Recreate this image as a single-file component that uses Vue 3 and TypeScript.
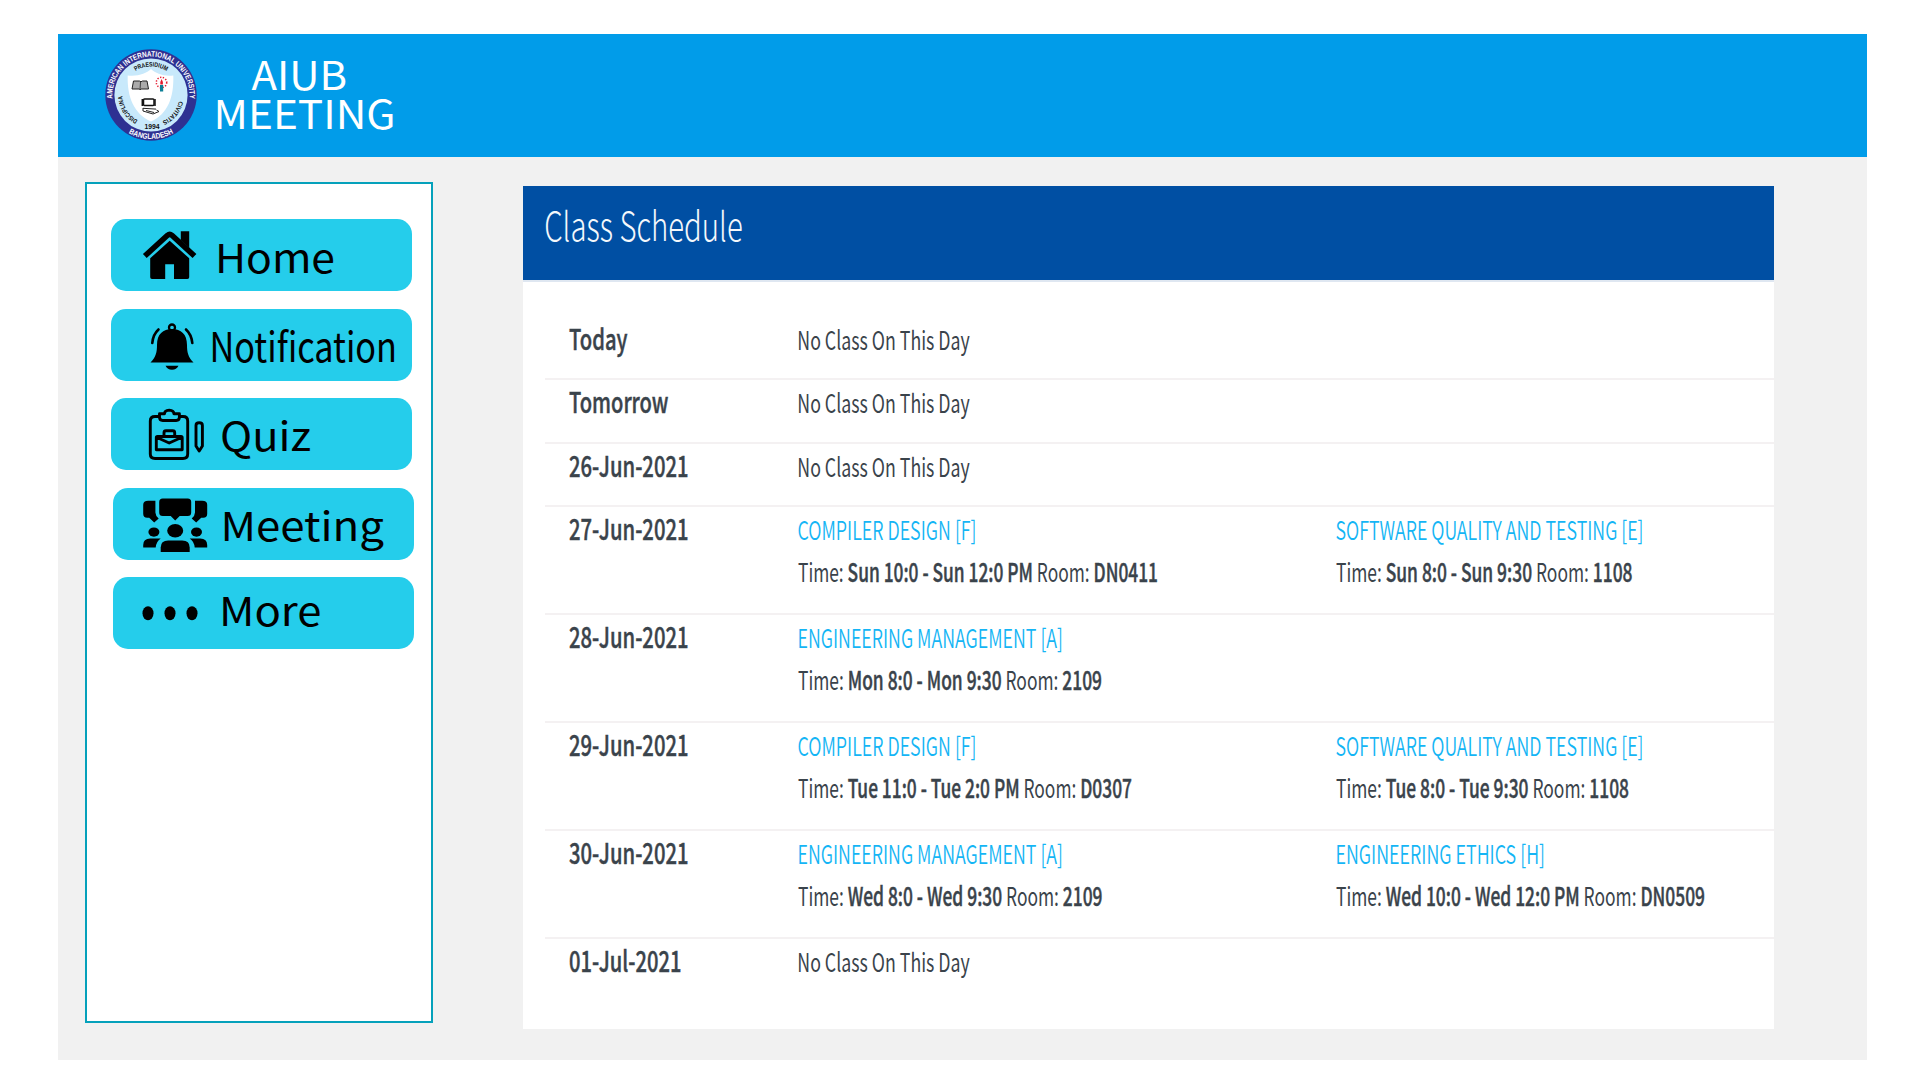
<script setup lang="ts">
import { computed } from 'vue'

interface Course {
  title: string
  titleWidth: number
  time: string
  room: string
  timeWidth: number
}

interface Day {
  label: string
  labelWidth: number
  courses: Course[]
}

const compiler = (time: string, room: string, timeWidth: number): Course => ({
  title: 'COMPILER DESIGN [F]', titleWidth: 179, time, room, timeWidth,
})
const quality = (time: string, timeWidth: number): Course => ({
  title: 'SOFTWARE QUALITY AND TESTING [E]', titleWidth: 308, time, room: '1108', timeWidth,
})
const management = (time: string, timeWidth: number): Course => ({
  title: 'ENGINEERING MANAGEMENT [A]', titleWidth: 265.5, time, room: '2109', timeWidth,
})

const days: Day[] = [
  { label: 'Today', labelWidth: 58.5, courses: [] },
  { label: 'Tomorrow', labelWidth: 99.5, courses: [] },
  { label: '26-Jun-2021', labelWidth: 119.5, courses: [] },
  {
    label: '27-Jun-2021', labelWidth: 119.5,
    courses: [compiler('Sun 10:0 - Sun 12:0 PM', 'DN0411', 360), quality('Sun 8:0 - Sun 9:30', 296.5)],
  },
  { label: '28-Jun-2021', labelWidth: 119.5, courses: [management('Mon 8:0 - Mon 9:30', 304)] },
  {
    label: '29-Jun-2021', labelWidth: 119.5,
    courses: [compiler('Tue 11:0 - Tue 2:0 PM', 'D0307', 334), quality('Tue 8:0 - Tue 9:30', 293)],
  },
  {
    label: '30-Jun-2021', labelWidth: 119.5,
    courses: [
      management('Wed 8:0 - Wed 9:30', 304.5),
      { title: 'ENGINEERING ETHICS [H]', titleWidth: 209.5, time: 'Wed 10:0 - Wed 12:0 PM', room: 'DN0509', timeWidth: 369 },
    ],
  },
  { label: '01-Jul-2021', labelWidth: 112.5, courses: [] },
]

interface NavItem {
  id: string
  label: string
  x: number
  y: number
  width: number
  size: number
  shift: number
}

const nav: NavItem[] = [
  { id: 'home', label: 'Home', x: 104, y: 54.3, width: 120, size: 40, shift: 0 },
  { id: 'notification', label: 'Notification', x: 98.5, y: 52.8, width: 187.5, size: 41, shift: 0.5 },
  { id: 'quiz', label: 'Quiz', x: 109, y: 53.3, width: 91, size: 40, shift: 0.5 },
  { id: 'meeting', label: 'Meeting', x: 107.5, y: 53.2, width: 163.5, size: 40, shift: 2 },
  { id: 'more', label: 'More', x: 106, y: 49.3, width: 102.5, size: 40, shift: 2 },
]

const rows = computed(() => days.map((d) => ({ ...d, busy: d.courses.length > 0 })))
</script>

<template>
  <div class="page">
    <header class="topbar">
      <svg class="logo" width="92" height="92" viewBox="-46 -46 92 92">
        <defs>
          <path id="ring-all" d="M-37.8 8A38.6 38.6 0 1 1 37.8 8" />
          <path id="ring-low" d="M-44 0A44 44 0 0 0 44 0" />
          <path id="ring-in" d="M0 28.500A28.500 28.500 0 0 1 0 -28.500A28.500 28.500 0 0 1 0 28.500" />
        </defs>
        <circle r="45.700" fill="#2e3192" />
        <circle r="36.600" fill="#c8e9fb" />
        <path d="M-23.300-19.500C-12-18.500-5-21.500 0-26 5-21.500 12-18.500 22.300-19.500 23 2 17 19 0 26.500-17 19-24 2-23.300-19.500Z" fill="#fff" />
        <g font-family="Liberation Sans, sans-serif" font-weight="700" text-anchor="middle">
          <g fill="#fff" font-size="7.800">
            <text><textPath href="#ring-all" startOffset="50%" textLength="128" lengthAdjust="spacingAndGlyphs">AMERICAN INTERNATIONAL UNIVERSITY</textPath></text>
            <text><textPath href="#ring-low" startOffset="50%" textLength="47" lengthAdjust="spacingAndGlyphs">BANGLADESH</textPath></text>
          </g>
          <g fill="#111" font-size="6.400">
            <text><textPath href="#ring-in" startOffset="50%" textLength="33" lengthAdjust="spacingAndGlyphs">PRAESIDIUM</textPath></text>
            <text><textPath href="#ring-in" startOffset="16%" textLength="30" lengthAdjust="spacingAndGlyphs">DISCIPLINA</textPath></text>
            <text><textPath href="#ring-in" startOffset="86%" textLength="27" lengthAdjust="spacingAndGlyphs">CIVITATIS</textPath></text>
            <text x="1" y="34.300" font-size="6.800">1994</text>
          </g>
        </g>
        <path d="M-17.500-14h6l1.500.8 1.500-.8h4.500l1.500 8h-7.500l-.8.8-.8-.8H-19Z" fill="#aaa" stroke="#222" stroke-width="1" />
        <path d="M-10.500-13l-.5 8" stroke="#222" stroke-width=".8" />
        <circle cx="10.500" cy="-12.500" r="5.200" fill="none" stroke="#e31b2f" stroke-width="1.500" stroke-dasharray="1.300 1.500" />
        <path d="M10.600-16q1.600 2.500 1.300 5.500h-2.600q-.3-3 1.300-5.500" fill="#e31b2f" />
        <path d="M9-10h3.200v6.500H9Z" fill="#0c7f96" />
        <rect x="-7.500" y="4" width="10.500" height="6.500" rx="1" fill="#fff" stroke="#111" stroke-width="1.500" />
        <path d="M-8.700 4v7M4 4v7" stroke="#111" stroke-width="1.500" />
        <path d="M-8 13.300l13 .8M-8 13v3l10 3 6-2.500-2.500-1.500M-5 15.500l8 2" fill="none" stroke="#222" stroke-width="1" />
      </svg>
      <svg class="brand" width="200" height="90" fill="#fff" font-size="40">
        <text x="44.500" y="41.700" textLength="95.500" lengthAdjust="spacingAndGlyphs">AIUB</text>
        <text x="6.500" y="81" textLength="182" lengthAdjust="spacingAndGlyphs">MEETING</text>
      </svg>
    </header>

    <div class="content">
      <nav class="sidebar">
        <a v-for="item in nav" :key="item.id" class="nav-item" :style="{ marginLeft: item.shift + 'px' }">
          <svg width="301" height="72">
            <g v-if="item.id === 'home'" transform="translate(-.5)">
              <path d="M70.300 12.300h8.400v16.500l-8.400-7.500Z" />
              <path d="M34.300 37L57 16.300q2.200-1.900 4.400 0L84 37" fill="none" stroke="#000" stroke-width="5.600" stroke-linejoin="round" />
              <path d="M59.200 21.700L78.700 39.300V58.200q0 1.800-1.800 1.800H63.500V45.300h-8.800V60H41.500q-1.800 0-1.800-1.800V39.300Z" />
            </g>
            <g v-else-if="item.id === 'notification'">
              <circle cx="61" cy="18.500" r="3" fill="none" stroke="#000" stroke-width="2.300" />
              <path d="M39.500 53.500C45 48 46 43 46 36 46 25 52 20 61 20s15 5 15 16c0 7 1 12 6.500 17.500Z" />
              <path d="M54.500 56.700h13q-2 4-6.500 4t-6.500-4" />
              <path d="M47.500 20.500Q42 25.500 41.300 34M75 20.500Q80.500 25.500 81.300 34" fill="none" stroke="#000" stroke-width="2.600" stroke-linecap="round" />
            </g>
            <g v-else-if="item.id === 'quiz'" fill="none" stroke="#000" stroke-width="2.900" stroke-linejoin="round">
              <path d="M48 18.500h-4q-4.700 0-4.700 4.500v33q0 4.500 4.700 4.500h28q4.700 0 4.700-4.500V23q0-4.500-4.700-4.500H69" />
              <path d="M48.500 15.800h5q0-3.500 4.700-3.700 4.700.2 4.700 3.700h5.500v3.500q0 3.200-3.200 3.200H51.700q-3.200 0-3.200-3.200Z" />
              <path d="M46.500 38.500h23.500q1.200 0 1.200 1.200v12H45.300v-12q0-1.200 1.200-1.200ZM46 39.500l12.200 5.500 12.200-5.500M53 38v-3.200q0-2 2-2h6.700q2 0 2 2V38" />
              <path d="M85 27.500q0-2.700 3.200-2.700t3.200 2.700V48l-3.200 5-3.200-5Z" />
            </g>
            <g v-else-if="item.id === 'meeting'" transform="translate(-.8 -.4)">
              <path d="M50.500 11h25q3.500 0 3.500 3.500V25q0 3.500-3.500 3.500H67.500L63 33l-4.500-4.500h-8q-3.500 0-3.500-3.500V14.500q0-3.500 3.500-3.500" />
              <path d="M36 13.200h7.200V25q0 3 3.300 6L42 35l-5-4.800h-2q-4 0-4-4v-9q0-4 5-4M90 13.200h-7.200V25q0 3-3.300 6L84 35l5-4.800h2q4 0 4-4v-9q0-4-5-4" />
              <ellipse cx="63" cy="43.200" rx="8" ry="6.700" />
              <ellipse cx="41.700" cy="44.500" rx="5.500" ry="4.600" />
              <ellipse cx="84.300" cy="44.500" rx="5.500" ry="4.600" />
              <path d="M48.500 64.500v-4.500q0-7 7.500-7h14q7.500 0 7.500 7v4.500Z" />
              <path d="M31 60V57.500q0-6.500 7-6.500h10.500q-4.500 3-5 9ZM95 60V57.500q0-6.500-7-6.500H77.500q4.500 3 5 9Z" />
            </g>
            <g v-else-if="item.id === 'more'">
              <ellipse cx="35" cy="36.300" rx="5.500" ry="7" />
              <ellipse cx="57" cy="36.300" rx="5.500" ry="7" />
              <ellipse cx="79" cy="36.300" rx="5.500" ry="7" />
            </g>
            <text :x="item.x" :y="item.y" :font-size="item.size" :textLength="item.width" lengthAdjust="spacingAndGlyphs">{{ item.label }}</text>
          </svg>
        </a>
      </nav>

      <main class="card">
        <div class="card-head">
          <svg width="240" height="94" font-size="40" font-weight="300" fill="#f4f8fc">
            <text x="21.200" y="54.900" textLength="198.500" lengthAdjust="spacingAndGlyphs">Class Schedule</text>
          </svg>
        </div>
        <div class="rows">
          <section v-for="day in rows" :key="day.label" class="row" :class="{ busy: day.busy }">
            <svg class="date" width="229" height="60" font-size="28.500">
              <text class="strong" x="24" y="32.900" :textLength="day.labelWidth" lengthAdjust="spacingAndGlyphs">{{ day.label }}</text>
            </svg>
            <svg v-if="!day.busy" class="cell" width="400" height="60" font-size="26">
              <text x="23.300" y="33.200" textLength="172.500" lengthAdjust="spacingAndGlyphs">No Class On This Day</text>
            </svg>
            <svg v-for="c in day.courses" :key="c.title" class="cell" width="500" height="100" font-size="26">
              <text class="link" x="23.500" y="33.200" :textLength="c.titleWidth" lengthAdjust="spacingAndGlyphs">{{ c.title }}</text>
              <text x="24" y="75.300" :textLength="c.timeWidth" lengthAdjust="spacingAndGlyphs">Time: <tspan class="strong">{{ c.time }}</tspan> Room: <tspan class="strong">{{ c.room }}</tspan></text>
            </svg>
          </section>
        </div>
      </main>
    </div>
  </div>
</template>

<style>
body {
  margin: 0;
  background: #fff;
}
</style>

<style scoped>
.page {
  box-sizing: border-box;
  width: 1920px;
  height: 1080px;
  padding: 33.5px 53px 20.5px 58px;
  font-family: 'Noto Sans CJK SC', 'Noto Sans', sans-serif;
  overflow: hidden;
}
svg {
  display: block;
  flex: none;
  overflow: visible;
}
.topbar {
  display: flex;
  height: 123px;
  background: #019ce9;
}
.logo {
  margin: 15.5px 0 0 47px;
}
.brand {
  margin: 14.5px 0 0 9.5px;
}
.content {
  display: flex;
  align-items: flex-start;
  height: 903px;
  background: #f1f1f1;
}
.sidebar {
  box-sizing: border-box;
  width: 348px;
  height: 841px;
  margin: 25.5px 0 0 27px;
  padding: 35px 0 0 23.5px;
  border: 2px solid #05a1bb;
  background: #fff;
  display: flex;
  flex-direction: column;
  gap: 17.6px;
}
.nav-item {
  width: 301px;
  height: 72px;
  border-radius: 15px;
  background: #25cdeb;
  color: #000;
}
.card {
  width: 1251px;
  height: 843px;
  margin: 29px 0 0 90px;
  background: #fff;
}
.card-head {
  height: 94px;
  background: #004fa3;
  border-bottom: 2px solid #dfe7f1;
}
.rows {
  padding: 35px 0 0 21.5px;
}
.row {
  box-sizing: border-box;
  display: flex;
  height: 63.5px;
  border-bottom: 2px solid #f4f1f2;
  fill: #3a434b;
}
.row.busy {
  height: 108px;
}
.row:last-child {
  border-bottom: 0;
}
.cell + .cell {
  margin-left: 38.5px;
}
.link {
  fill: #14b5f5;
  font-weight: 350;
}
.strong {
  font-weight: 500;
  stroke: #3a434b;
  stroke-width: 0.45px;
}
</style>
